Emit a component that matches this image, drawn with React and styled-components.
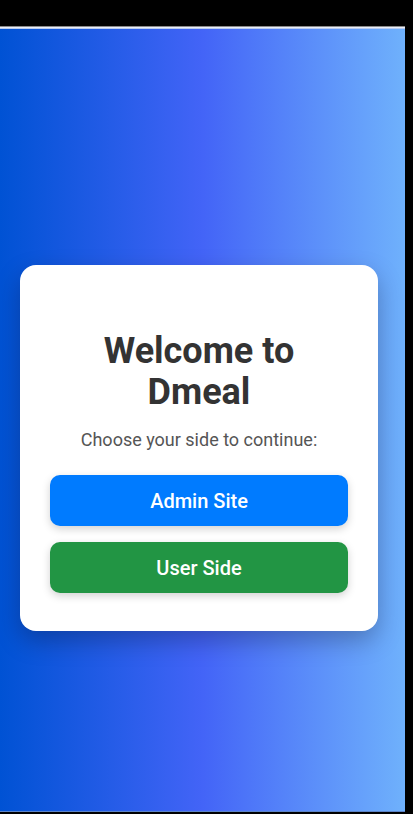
import React from 'react'
import styled, { createGlobalStyle } from 'styled-components'

const GlobalStyle = createGlobalStyle`
  html, body {
    margin: 0;
    padding: 0;
    background: #000;
  }
  body {
    font-family: Roboto, "Liberation Sans", sans-serif;
  }
`

const Frame = styled.div`
  width: 405px;
  height: 814px;
  padding-top: 26px;
  box-sizing: border-box;
  display: flex;
  flex-direction: column;
`

const Screen = styled.div`
  flex: 1;
  margin-bottom: 2px;
  border-top: 1px solid #8a8a8a;
  box-shadow: inset 0 1px 0 #e9eef8, inset 0 2px 0 #b9ccf2;
  border-bottom: 1px solid #5d84c6;
  background: linear-gradient(to right, #0052d4, #4364f7, #6fb1fc);
  display: flex;
  align-items: flex-start;
`

const Card = styled.div`
  margin: 238px 0 0 20px;
  width: 358px;
  box-sizing: border-box;
  background: #fff;
  border-radius: 16px;
  padding: 66px 30px 38px;
  box-shadow: 0 10px 25px rgba(0, 0, 0, 0.25);
  text-align: center;
`

const Title = styled.h1`
  margin: 0;
  font-size: 36px;
  line-height: 41px;
  font-weight: 700;
  color: #333;
`

const Subtitle = styled.p`
  margin: 16px 0 25px;
  font-size: 18px;
  color: #555;
`

const Button = styled.button`
  display: block;
  width: 100%;
  height: 51px;
  border: none;
  border-radius: 10px;
  background: ${p => p.$color};
  color: #fff;
  font-family: Roboto, "Liberation Sans", sans-serif;
  font-size: 20px;
  font-weight: 500;
  box-shadow: 0 3px 8px rgba(0, 0, 0, 0.18);
  & + & {
    margin-top: 16px;
  }
`

export default function App() {
  return (
    <Frame>
      <GlobalStyle />
      <Screen>
        <Card>
          <Title>Welcome to<br />Dmeal</Title>
          <Subtitle>Choose your side to continue:</Subtitle>
          <Button $color="#007bff">Admin Site</Button>
          <Button $color="#229544">User Side</Button>
        </Card>
      </Screen>
    </Frame>
  )
}
